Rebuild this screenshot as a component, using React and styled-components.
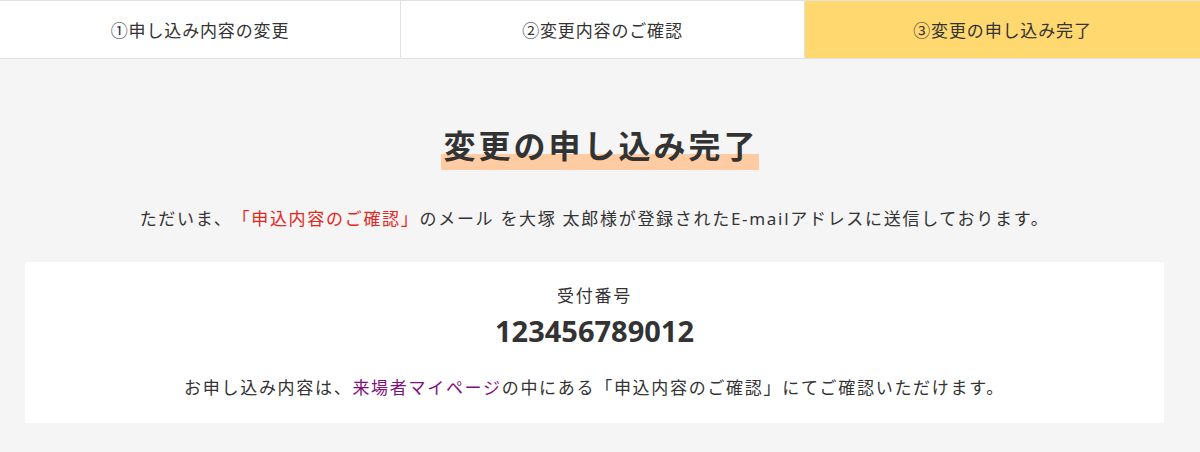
import React from 'react'
import styled, { createGlobalStyle } from 'styled-components'

const steps = [
  { id: 1, label: '①申し込み内容の変更' },
  { id: 2, label: '②変更内容のご確認' },
  { id: 3, label: '③変更の申し込み完了' },
]

const App = () => (
  <Page>
    <GlobalStyle />
    <Steps>
      {steps.map(({ id, label }) => (
        <Step key={id} active={id === 3}>{label}</Step>
      ))}
    </Steps>
    <Main>
      <TitleWrap>
        <Title>変更の申し込み完了</Title>
      </TitleWrap>
      <Body>
        <Lead>
          ただいま、<Red>「申込内容のご確認」</Red>のメール を大塚 太郎様が登録されたE-mailアドレスに送信しております。
        </Lead>
        <Card>
          <CardLabel>受付番号</CardLabel>
          <Number>123456789012</Number>
          <Note>
            お申し込み内容は、<Purple>来場者マイページ</Purple>の中にある「申込内容のご確認」にてご確認いただけます。
          </Note>
        </Card>
      </Body>
    </Main>
  </Page>
)

export default App

/* STYLES */

const GlobalStyle = createGlobalStyle`
  html, body {
    margin: 0;
    padding: 0;
    background: #f5f5f5;
  }
  body {
    font-family: "Noto Sans", "Noto Sans CJK JP", sans-serif;
    color: #333;
    text-spacing-trim: space-all;
  }
`

const Page = styled.div`
  width: 1200px;
  min-height: 452px;
  background: #f5f5f5;
`

const Steps = styled.div`
  display: grid;
  grid-template-columns: 400px 404px 396px;
  border-top: 1px solid #e2e2e2;
  border-bottom: 1px solid #e2e2e2;
  background: #fff;
`

const Step = styled.div`
  height: 57px;
  display: flex;
  align-items: center;
  justify-content: center;
  font-size: 17px;
  letter-spacing: 0.05em;
  color: #333;
  background: ${({ active }) => (active ? '#ffd970' : '#fff')};
  border-left: 1px solid #e2e2e2;

  &:first-child {
    border-left: none;
  }
`

const Main = styled.div`
  display: flex;
  flex-direction: column;
  padding-top: 66px;
`

const TitleWrap = styled.div`
  display: flex;
  justify-content: center;
`

const Title = styled.h1`
  margin: 0;
  padding: 0 0 3px 2px;
  font-size: 32px;
  font-weight: 700;
  letter-spacing: 3px;
  line-height: 42px;
  color: #333;
  background: linear-gradient(transparent 29px, #ffcba2 29px);
`

const Body = styled.div`
  display: flex;
  flex-direction: column;
  align-items: center;
  padding: 0 36px 0 25px;
`

const Lead = styled.p`
  margin: 34px 0 0;
  font-size: 17px;
  letter-spacing: 0.1em;
  line-height: 30px;
  text-align: center;
`

const Red = styled.span`
  color: #e3261c;
`

const Purple = styled.span`
  color: #7f0f7f;
`

const Card = styled.div`
  align-self: stretch;
  margin-top: 28px;
  height: 161px;
  background: #fff;
  display: flex;
  flex-direction: column;
  align-items: center;
  box-sizing: border-box;
  padding-top: 21px;
`

const CardLabel = styled.div`
  font-size: 17px;
  letter-spacing: 0.1em;
  line-height: 26px;
`

const Number = styled.div`
  margin-top: 4px;
  font-size: 29px;
  font-weight: 700;
  line-height: 36px;
`

const Note = styled.p`
  margin: 25px 0 0;
  font-size: 17px;
  letter-spacing: 0.1em;
  line-height: 28px;
`
